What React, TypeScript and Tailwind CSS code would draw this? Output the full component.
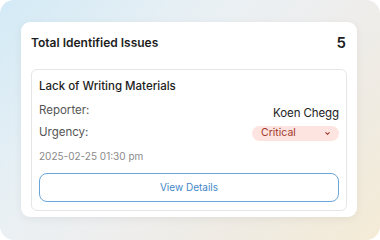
import React from "react"

export default function App() {
    return (
        <div className="w-[380px] h-[240px] bg-white">
            <div
                className="w-[380px] h-[240px] rounded-[14px] overflow-hidden pt-[22px] pl-[21px] bg-[linear-gradient(135deg,#d3eaf6_0%,#e9f0f4_35%,#eeeeee_55%,#efebe3_75%,#f4ebd6_100%)]"
                style={{ fontFamily: "Inter, 'Noto Sans', sans-serif" }}
            >
                {/* Card */}
                <div className="w-[336px] h-[195px] rounded-[9px] bg-white px-[10px] pt-[12px] shadow-[0_2px_10px_rgba(0,0,0,0.06)]">
                    <div className="flex items-center justify-between h-[18px]">
                        <p className="text-[12px] font-semibold text-[#1d1d1d]">
                            Total Identified Issues
                        </p>
                        <p className="text-[15px] font-semibold text-[#1d1d1d] pr-[1px]">5</p>
                    </div>

                    <div className="mt-[17px] rounded-[6px] border border-[#e6e6e6] px-[7px] pt-[8px] pb-[8px]">
                        <p className="h-[16px] leading-[16px] text-[11.5px] font-medium text-[#1d1d1d]">
                            Lack of Writing Materials
                        </p>

                        <div className="mt-[8px] flex items-end justify-between h-[19px]">
                            <span className="text-[11.5px] leading-[16px] self-start text-[#555555]">Reporter:</span>
                            <span className="text-[11.5px] leading-[16px] text-[#222222] tracking-[-0.1px]">Koen Chegg</span>
                        </div>

                        <div className="mt-[3px] flex items-center justify-between h-[18px]">
                            <span className="text-[11.5px] text-[#555555]">Urgency:</span>
                            <div className="flex items-center justify-between w-[87px] h-[15px] rounded-full bg-[#fde4e0] pl-[9px] pr-[8px]">
                                <span className="text-[10.5px] leading-none text-[#a3382c]">Critical</span>
                                <svg width="7" height="7" viewBox="0 0 24 24" fill="none" stroke="#a3382c" strokeWidth="3.5" strokeLinecap="round" strokeLinejoin="round">
                                    <path d="M6 9l6 6 6-6" />
                                </svg>
                            </div>
                        </div>

                        <p className="mt-[6px] h-[16px] leading-[16px] text-[10px] text-[#8a8a8a]">
                            2025-02-25 01:30 pm
                        </p>

                        <button className="mt-[9px] w-full h-[29px] rounded-[8px] border border-[#6aa5d8] text-[10px] text-[#3f87c8] bg-white">
                            View Details
                        </button>
                    </div>
                </div>
            </div>
        </div>
    )
}
